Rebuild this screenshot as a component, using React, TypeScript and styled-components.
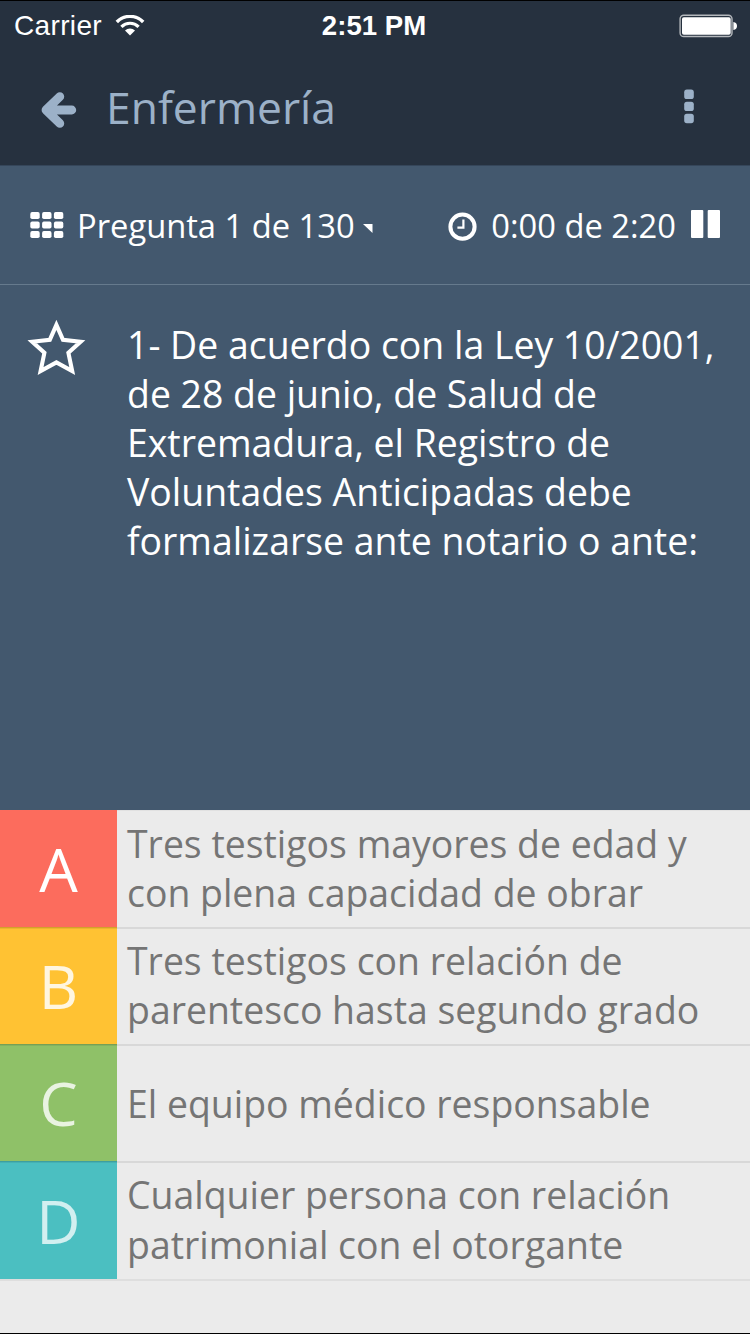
import React from 'react';
import styled, { createGlobalStyle } from 'styled-components';

const GlobalStyle = createGlobalStyle`
  * { box-sizing: border-box; }
  body { margin: 0; background: #ebebeb; }
`;

const Screen = styled.div`
  width: 750px;
  height: 1334px;
  display: flex;
  flex-direction: column;
  overflow: hidden;
  background: #ebebeb;
  border-top: 1px solid #000;
  border-bottom: 1px solid #000;
  font-family: 'Open Sans', 'Noto Sans', sans-serif;
  svg { display: block; flex: none; }
`;

const StatusBar = styled.div`
  height: 49px;
  flex: none;
  display: grid;
  grid-template-columns: 1fr auto 1fr;
  align-items: center;
  padding: 0 13px 0 14px;
  background: #26313f;
  color: #fff;
  font-family: 'Liberation Sans', Arial, sans-serif;
  font-size: 28px;
  line-height: 48px;
`;

const Carrier = styled.div`
  display: flex;
  align-items: center;
  gap: 13px;
  letter-spacing: 0.35px;
`;

const Clock = styled.div`
  padding-right: 3px;
  font-weight: 700;
  font-size: 27.6px;
`;

const BatterySlot = styled.div`
  display: flex;
  justify-content: flex-end;
`;

const TitleBar = styled.header`
  height: 116px;
  flex: none;
  display: flex;
  align-items: center;
  padding: 0 56px 0 40px;
  background: #26313f;
  border-bottom: 1px solid #35465a;
  color: #9cb1c8;
`;

const Title = styled.h1`
  flex: 1;
  margin: 0 0 2px 28px;
  font-size: 44.4px;
  font-weight: 370;
  line-height: 60px;
`;

const InfoBar = styled.div`
  height: 119px;
  flex: none;
  display: flex;
  align-items: center;
  padding: 2px 30px 0;
  background: #43586e;
  border-bottom: 1px solid #667a8d;
  color: #fff;
  font-size: 32.7px;
  line-height: 46px;
`;

const Counter = styled.div`
  display: flex;
  align-items: center;
  flex: 1;
`;

const Timer = styled.div`
  display: flex;
  align-items: center;
`;

const Label = styled.span<{ $left: number; $right: number }>`
  margin: 0 ${(p) => p.$right}px 0 ${(p) => p.$left}px;
  white-space: nowrap;
`;

const Question = styled.section`
  height: 525px;
  flex: none;
  display: flex;
  align-items: flex-start;
  padding: 34px 0 0 27px;
  background: #43586e;
  color: #fff;
`;

const QuestionText = styled.p`
  margin: 0.5px 0 0 41px;
  font-size: 37.4px;
  line-height: 49.2px;
  white-space: pre-line;
`;

const Answers = styled.div`
  display: flex;
  flex-direction: column;
`;

const AnswerRow = styled.div`
  height: 117px;
  display: flex;

  &:last-child {
    height: 118px;
    box-shadow: 0 2px 0 #dedede;
  }
`;

const Letter = styled.div<{ $bg: string; $opacity: number }>`
  width: 117px;
  display: flex;
  align-items: center;
  justify-content: center;
  background: ${(p) => p.$bg};
  color: rgba(255, 255, 255, ${(p) => p.$opacity});
  font-size: 61px;
  line-height: 80px;
  padding-top: 1px;

  ${AnswerRow}:not(:first-child) & {
    box-shadow: inset 0 1px 0 rgba(0, 0, 0, 0.1), inset 0 2px 0 rgba(0, 0, 0, 0.07);
  }
`;

const AnswerText = styled.div<{ $single: boolean }>`
  flex: 1;
  display: flex;
  align-items: center;
  padding: ${(p) => (p.$single ? '2px 0 0 10px' : '0 0 1px 10px')};
  color: #757575;
  font-size: 37.4px;
  line-height: 49.2px;
  white-space: pre-line;
  background: #ebebeb;

  ${AnswerRow}:not(:first-child) & {
    box-shadow: inset 0 2px 0 #d8d8d8;
  }
  ${AnswerRow}:first-child & {
    box-shadow: inset 0 1px 0 #e1e1e1;
  }
`;

const WifiIcon = () => (
  <svg width="30" height="22" viewBox="0 0 30 22" fill="none" stroke="#fff">
    <path d="M1.8 7A18.4 18.4 0 0 1 28.2 7" strokeWidth="3.4" />
    <path d="M6.4 11.8A12.2 12.2 0 0 1 23.6 11.8" strokeWidth="3.2" />
    <path d="M15 20.6L10 15.4A7.3 7.3 0 0 1 20 15.4Z" fill="#fff" stroke="none" />
  </svg>
);

const BatteryIcon = () => (
  <svg width="58" height="24" viewBox="0 0 58 24">
    <rect x="1.1" y="1.2" width="51.9" height="21.3" rx="3.6" fill="none" stroke="#b4b8bc" strokeWidth="1.4" />
    <rect x="3" y="3.2" width="48.7" height="17.6" rx="1.8" fill="#fff" />
    <path d="M54.4 8Q58 8.6 58 12T54.4 16Z" fill="#fff" />
  </svg>
);

const BackArrow = styled.svg`
  margin-top: 4px;
`;

const BackIcon = () => (
  <BackArrow width="38" height="38" viewBox="0 0 38 38" fill="none" stroke="currentColor" strokeWidth="8.8" strokeLinecap="round" strokeLinejoin="round">
    <path d="M19.8 5.6L6 19L19.8 32.4M6 19H31.8" />
    <path d="M16 12L8 19L16 26Z" fill="currentColor" stroke="none" />
  </BackArrow>
);

const Dots = styled.svg`
  margin-bottom: 1px;
`;

const MoreIcon = () => (
  <Dots width="10" height="36" viewBox="0 0 10 36" fill="currentColor">
    {[0.6, 12.7, 24.8].map((y) => (
      <rect key={y} x="0.2" y={y} width="9.6" height="9.4" rx="2.6" />
    ))}
  </Dots>
);

const Grid = styled.svg`
  margin-bottom: 2px;
`;

const GridIcon = () => (
  <Grid width="34" height="26" viewBox="0 0 34 26" fill="currentColor">
    {[0, 9.5, 19].map((y) =>
      [0.3, 12.1, 23.9].map((x) => <rect key={`${x}-${y}`} x={x} y={y + 0.1} width="9.4" height="6.9" rx="1.8" />),
    )}
  </Grid>
);

const Caret = styled.svg`
  margin-top: 4px;
`;

const CaretIcon = () => (
  <Caret width="10" height="9" viewBox="0 0 10 9" fill="currentColor">
    <path d="M0 0H9.5V9Z" />
  </Caret>
);

const ClockIcon = () => (
  <svg width="29" height="29" viewBox="0 0 29 29" fill="none" stroke="currentColor">
    <circle cx="14.5" cy="14.7" r="12.1" strokeWidth="4" />
    <path d="M15.4 7.6V15.7H9.4" strokeWidth="2.2" />
  </svg>
);

const Pause = styled.svg`
  margin-bottom: 4px;
`;

const PauseIcon = () => (
  <Pause width="29" height="28" viewBox="0 0 29 28" fill="currentColor">
    <rect x="0" y="0" width="12.3" height="28" rx="1" />
    <rect x="16.7" y="0" width="12.3" height="28" rx="1" />
  </Pause>
);

const StarIcon = () => (
  <svg width="59" height="58" viewBox="0 0 59 58" fill="none" stroke="currentColor" strokeWidth="4.1">
    <path d="M29.4 5.8L36 20.8L53.6 22.8L41.4 33.8L45.2 52L29.4 43.4L13.6 52L17.4 33.8L5.2 22.8L22.8 20.8Z" />
  </svg>
);

const answers = [
  { letter: 'A', bg: '#fc6c5d', opacity: 1, text: 'Tres testigos mayores de edad y\ncon plena capacidad de obrar' },
  { letter: 'B', bg: '#ffc233', opacity: 0.85, text: 'Tres testigos con relación de\nparentesco hasta segundo grado' },
  { letter: 'C', bg: '#8fc168', opacity: 0.8, text: 'El equipo médico responsable' },
  { letter: 'D', bg: '#4bbfc1', opacity: 0.75, text: 'Cualquier persona con relación\npatrimonial con el otorgante' },
];

export default function App() {
  return (
    <Screen>
      <GlobalStyle />
      <StatusBar>
        <Carrier>
          Carrier
          <WifiIcon />
        </Carrier>
        <Clock>2:51 PM</Clock>
        <BatterySlot>
          <BatteryIcon />
        </BatterySlot>
      </StatusBar>
      <TitleBar>
        <BackIcon />
        <Title>Enfermería</Title>
        <MoreIcon />
      </TitleBar>
      <InfoBar>
        <Counter>
          <GridIcon />
          <Label $left={13} $right={8}>Pregunta 1 de 130</Label>
          <CaretIcon />
        </Counter>
        <Timer>
          <ClockIcon />
          <Label $left={14} $right={15}>0:00 de 2:20</Label>
          <PauseIcon />
        </Timer>
      </InfoBar>
      <Question>
        <StarIcon />
        <QuestionText>
          {'1- De acuerdo con la Ley 10/2001,\nde 28 de junio, de Salud de\nExtremadura, el Registro de\nVoluntades Anticipadas debe\nformalizarse ante notario o ante:'}
        </QuestionText>
      </Question>
      <Answers>
        {answers.map((a) => (
          <AnswerRow key={a.letter}>
            <Letter $bg={a.bg} $opacity={a.opacity}>
              {a.letter}
            </Letter>
            <AnswerText $single={!a.text.includes('\n')}>{a.text}</AnswerText>
          </AnswerRow>
        ))}
      </Answers>
    </Screen>
  );
}
